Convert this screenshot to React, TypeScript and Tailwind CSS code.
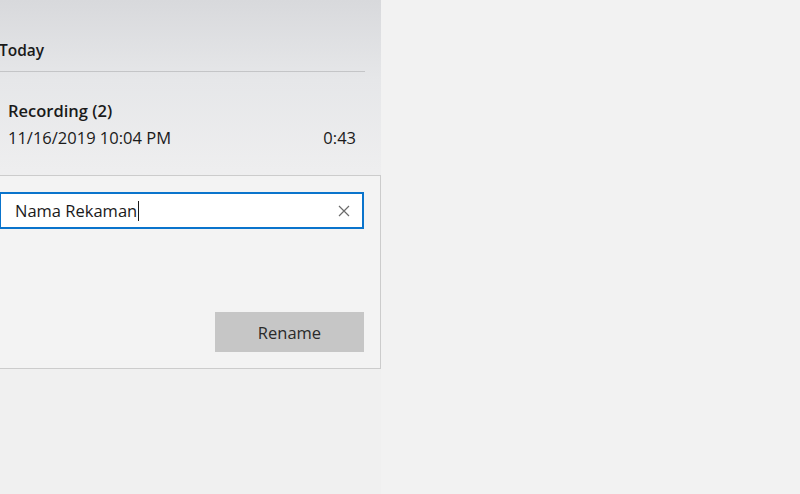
import React from "react";

export default function App() {
  return (
    <div
      className="w-[800px] h-[494px] flex bg-[#f2f2f2] overflow-hidden text-[#1a1a1a]"
      style={{ fontFamily: '"Open Sans", "Noto Sans", sans-serif' }}
    >
      <div className="w-[381px] h-full flex flex-col overflow-hidden bg-[linear-gradient(to_bottom,#d8d9dc_0px,#e6e7e9_80px,#eeeeef_170px,#f0f0f0_260px,#f0f0f0_494px)]">
        <div className="h-[40px]" />
        <div className="h-[20px] flex items-center -ml-[1px] text-[15.5px] font-semibold leading-[20px]">
          Today
        </div>
        <div className="h-[11px]" />
        <div className="w-[365px] h-px bg-[#c4c5c7]" />
        <div className="h-[29px]" />
        <div className="pl-[8px] pr-[25px]">
          <div className="text-[16.5px] font-semibold leading-[20px]">Recording (2)</div>
          <div className="mt-[7px] flex justify-between text-[16.5px] leading-[20px]">
            <span>11/16/2019 10:04 PM</span>
            <span>0:43</span>
          </div>
        </div>
        <div className="h-[27px]" />
        <div className="-ml-[2px] w-[383px] h-[194px] border border-[#cccccc] bg-[#f3f3f3] flex flex-col pr-[16px] pt-[16px] pb-[16px]">
          <div className="h-[37px] border-2 border-[#0a74cc] bg-white flex items-center pl-[14px] pr-[10px]">
            <span className="text-[16.5px] leading-[20px] text-[#1a1a1a]">Nama Rekaman</span>
            <span className="w-px h-[20px] bg-[#1a1a1a] ml-[1px]" />
            <div className="flex-1" />
            <svg width="12" height="12" viewBox="0 0 12 12" className="mr-[2px]">
              <path d="M1 1 L11 11 M11 1 L1 11" stroke="#6b6b6b" strokeWidth="1.2" fill="none" />
            </svg>
          </div>
          <div className="flex-1" />
          <div className="flex justify-end">
            <div className="w-[149px] h-[40px] bg-[#c6c6c6] flex items-center justify-center pt-[3px] text-[16.5px] text-[#2a2a2a]">
              Rename
            </div>
          </div>
        </div>
      </div>
      <div className="flex-1" />
    </div>
  );
}
